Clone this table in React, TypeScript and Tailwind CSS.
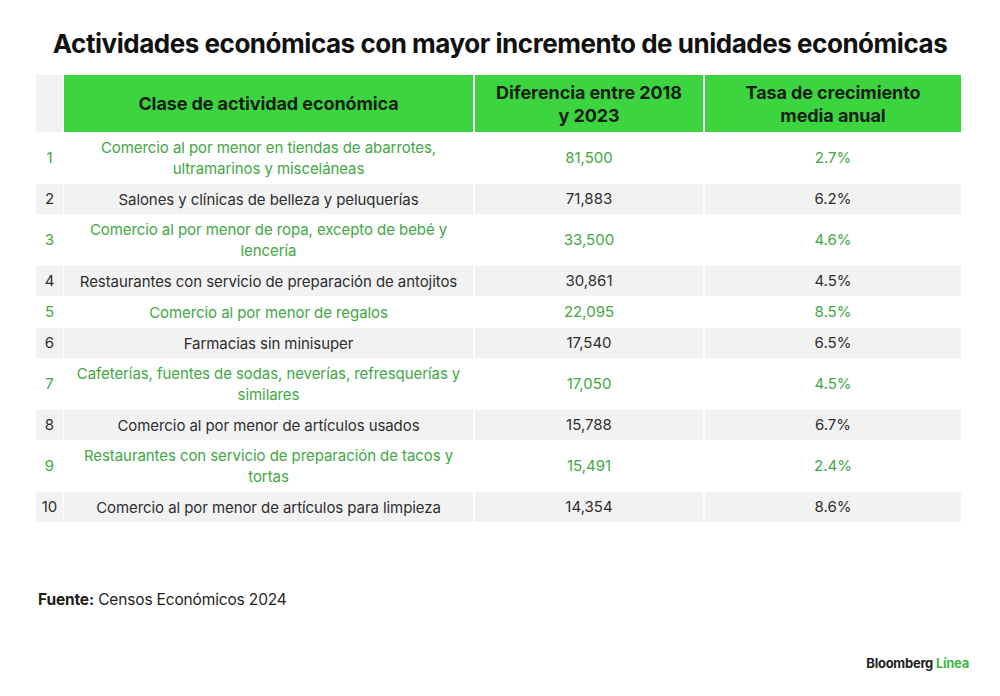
const rows: { n: number; name: string[]; diff: string; rate: string; green: boolean }[] = [
  { n: 1, name: ["Comercio al por menor en tiendas de abarrotes,", "ultramarinos y misceláneas"], diff: "81,500", rate: "2.7%", green: true },
  { n: 2, name: ["Salones y clínicas de belleza y peluquerías"], diff: "71,883", rate: "6.2%", green: false },
  { n: 3, name: ["Comercio al por menor de ropa, excepto de bebé y", "lencería"], diff: "33,500", rate: "4.6%", green: true },
  { n: 4, name: ["Restaurantes con servicio de preparación de antojitos"], diff: "30,861", rate: "4.5%", green: false },
  { n: 5, name: ["Comercio al por menor de regalos"], diff: "22,095", rate: "8.5%", green: true },
  { n: 6, name: ["Farmacias sin minisuper"], diff: "17,540", rate: "6.5%", green: false },
  { n: 7, name: ["Cafeterías, fuentes de sodas, neverías, refresquerías y", "similares"], diff: "17,050", rate: "4.5%", green: true },
  { n: 8, name: ["Comercio al por menor de artículos usados"], diff: "15,788", rate: "6.7%", green: false },
  { n: 9, name: ["Restaurantes con servicio de preparación de tacos y", "tortas"], diff: "15,491", rate: "2.4%", green: true },
  { n: 10, name: ["Comercio al por menor de artículos para limpieza"], diff: "14,354", rate: "8.6%", green: false },
];

export default function App() {
  return (
    <main className="w-[1000px] h-[696px] bg-white relative font-['Inter',sans-serif] text-[#2b2b2b] overflow-hidden">
      {/* Title */}
      <h1 className="pt-[27px] text-center text-[26px] leading-[34px] font-bold tracking-[-0.018em] text-[#111]">
        Actividades económicas con mayor incremento de unidades económicas
      </h1>

      {/* Table */}
      <div className="mt-[14px] ml-[36px] w-[926px] grid grid-cols-[27px_409px_229px_257px] gap-x-[1px] gap-y-[1px]">
        {/* Header */}
        <div className="bg-[#f2f2f2] h-[57px]" />
        <div className="bg-[#3dd53f] h-[57px] flex items-center justify-center text-[18px] font-bold tracking-[-0.005em] text-[#152015]">
          Clase de actividad económica
        </div>
        <div className="bg-[#3dd53f] h-[57px] flex flex-col items-center justify-center text-[18px] leading-[23px] font-bold tracking-[-0.005em] text-[#152015] ml-[1px]">
          <span>Diferencia entre 2018</span>
          <span>y 2023</span>
        </div>
        <div className="bg-[#3dd53f] h-[57px] flex flex-col items-center justify-center text-[18px] leading-[23px] font-bold tracking-[-0.005em] text-[#152015] ml-[1px]">
          <span>Tasa de crecimiento</span>
          <span>media anual</span>
        </div>

        {rows.map((r) => {
          const bg = r.green ? "bg-white" : "bg-[#f2f2f2]";
          const color = r.green ? "text-[#3fa843]" : "text-[#2e2e2e]";
          const h = r.name.length > 1 ? "h-[50px]" : "h-[30px]";
          return (
            <div key={r.n} className="contents">
              <div className={`${bg} ${color} ${h} flex items-center justify-center text-[15px]`}>{r.n}</div>
              <div className={`${bg} ${color} ${h} flex flex-col items-center justify-center text-[15px] leading-[21px] tracking-[-0.005em]`}>
                {r.name.map((l) => (
                  <span key={l}>{l}</span>
                ))}
              </div>
              <div className={`${bg} ${color} ${h} ml-[1px] flex items-center justify-center text-[15px]`}>{r.diff}</div>
              <div className={`${bg} ${color} ${h} ml-[1px] flex items-center justify-center text-[15px]`}>{r.rate}</div>
            </div>
          );
        })}
      </div>

      {/* Source */}
      <p className="mt-[66px] ml-[38px] text-[15.5px] tracking-[-0.01em] text-[#1e1e1e]">
        <span className="font-bold">Fuente:</span> Censos Económicos 2024
      </p>

      {/* Logo */}
      <div className="absolute right-[31px] top-[654px] text-[13px] font-bold tracking-[-0.02em]">
        <span className="text-[#222]">Bloomberg</span> <span className="text-[#3fb846]">Línea</span>
      </div>
    </main>
  );
}
